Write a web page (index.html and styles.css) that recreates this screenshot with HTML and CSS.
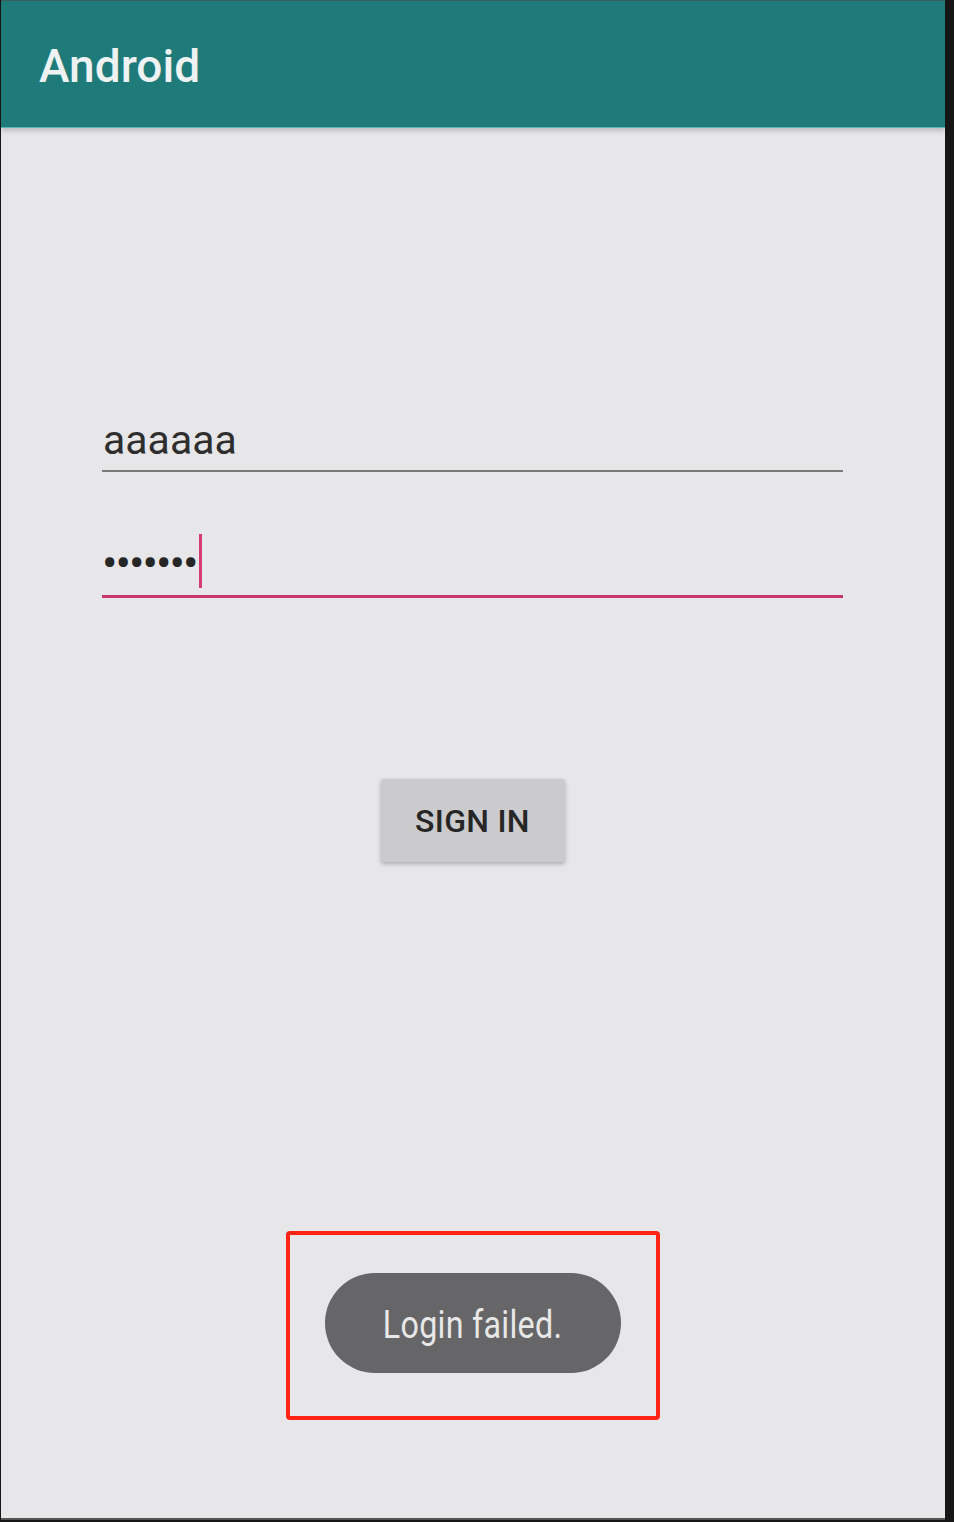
FILE: index.html
```html
<!DOCTYPE html>
<html>
<head>
<meta charset="utf-8">
<link rel="stylesheet" href="styles.css">
</head>
<body>
<div class="screen">
  <header class="appbar"><span class="title">Android</span></header>
  <main class="content">
    <div class="field field-user"><span class="value">aaaaaa</span></div>
    <div class="field field-pass">
      <span class="dots">•••••••</span><span class="cursor"></span>
    </div>
    <button class="signin">SIGN IN</button>
    <div class="highlight">
      <div class="toast"><span class="toast-text">Login failed.</span></div>
    </div>
  </main>
</div>
</body>
</html>
```
FILE: styles.css
```css
html, body {
  margin: 0;
  padding: 0;
}
body {
  width: 954px;
  height: 1522px;
  background: #161616;
  overflow: hidden;
  font-family: Roboto, "Noto Sans", sans-serif;
}
.screen {
  width: 944px;
  height: 1520px;
  margin-left: 1px;
  background: #e7e6e8;
  display: flex;
  flex-direction: column;
  border-bottom: 2px solid #555;
  box-sizing: border-box;
}
.appbar {
  height: 128px;
  box-sizing: border-box;
  background: #1f7a7a;
  border-top: 1px solid #3a5d5d;
  border-bottom: 1px solid #5fb3b0;
  box-shadow: 0 3px 5px rgba(0,0,0,0.18);
  display: flex;
  align-items: center;
  padding: 4px 0 0 38px;
  position: relative;
  z-index: 1;
}
.title {
  color: #eef2f2;
  font-size: 46px;
  font-weight: 500;
  line-height: 1;
}
.content {
  display: flex;
  flex-direction: column;
  align-items: center;
  padding: 0 102px 0 101px;
}
.field {
  align-self: stretch;
  display: flex;
  align-items: center;
}
.field-user {
  margin-top: 286px;
  height: 52px;
  padding-bottom: 4px;
  border-bottom: 2px solid #7a7a7a;
}
.value {
  font-size: 41px;
  line-height: 52px;
  color: #2e2e2e;
  padding-left: 1px;
  letter-spacing: 0;
}
.field-pass {
  margin-top: 58px;
  height: 54px;
  padding-top: 4px;
  padding-bottom: 7px;
  border-bottom: 3px solid #c9386c;
}
.dots {
  font-size: 46px;
  line-height: 54px;
  color: #262626;
  letter-spacing: -2px;
  margin-left: 0;
  position: relative;
  top: 2px;
}
.cursor {
  width: 3px;
  height: 54px;
  background: #d63a72;
  margin-left: 2px;
}
.signin {
  margin-top: 181px;
  width: 184px;
  height: 83px;
  border: none;
  border-radius: 3px;
  background: #cbcacc;
  box-shadow: 0 2px 4px rgba(0,0,0,0.25);
  font-family: Roboto, "Noto Sans", sans-serif;
  font-size: 32px;
  font-weight: 500;
  color: #262626;
  letter-spacing: 0.3px;
  padding: 0;
}
.highlight {
  margin-top: 369px;
  width: 374px;
  height: 189px;
  box-sizing: border-box;
  border: 4px solid #ff2416;
  border-radius: 4px;
  display: flex;
  justify-content: center;
  padding-top: 38px;
}
.toast {
  width: 296px;
  height: 100px;
  border-radius: 50px;
  background: #666567;
  display: flex;
  align-items: center;
  justify-content: center;
}
.toast-text {
  display: inline-block;
  color: #e8e8e8;
  font-size: 38px;
  transform: scaleX(0.85);
  letter-spacing: 0.3px;
  position: relative;
  top: 2px;
}
```
